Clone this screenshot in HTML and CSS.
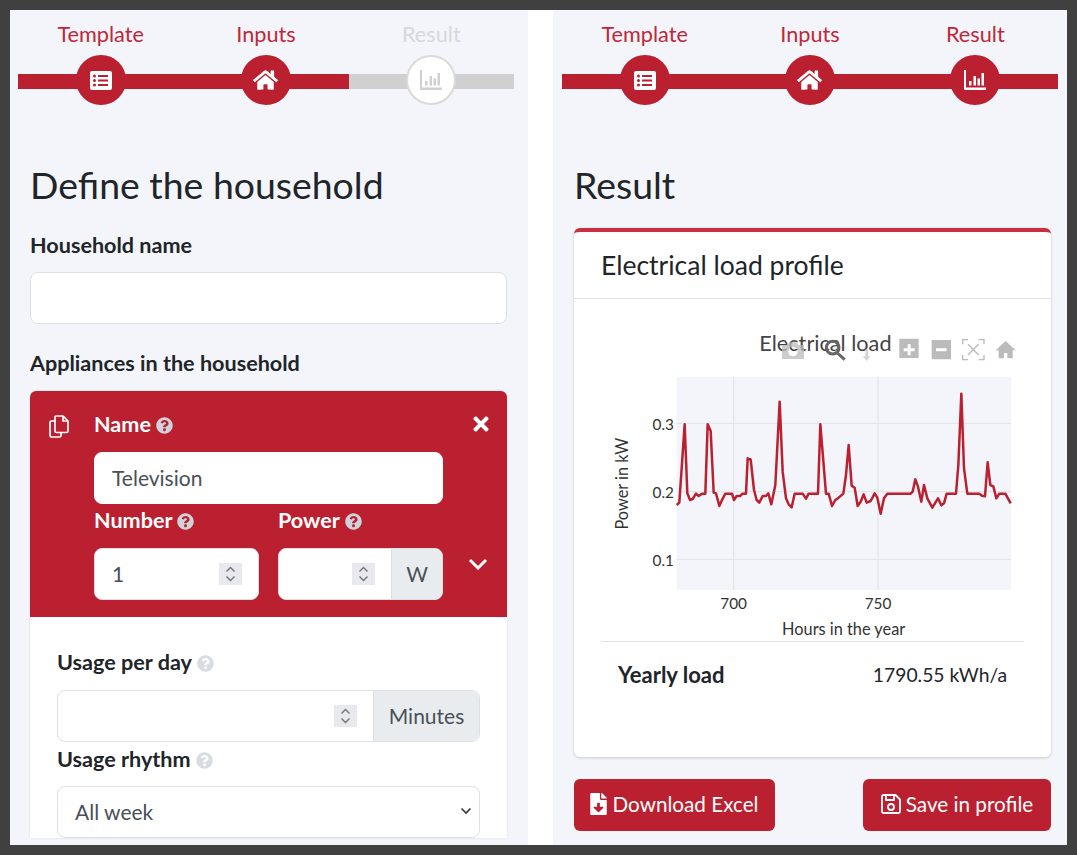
FILE: index.html
```html
<!DOCTYPE html>
<html lang="en">
<head>
<meta charset="UTF-8">
<meta name="viewport" content="width=device-width, initial-scale=1.0">
<link rel="stylesheet" href="styles.css">
<title>Load profile generator</title>
</head>
<body>
  <svg class="defs" width="0" height="0" aria-hidden="true">
    <symbol id="i-list" viewBox="0 0 22 19">
      <path fill-rule="evenodd" d="M2 0h18a2 2 0 0 1 2 2v15a2 2 0 0 1-2 2H2a2 2 0 0 1-2-2V2a2 2 0 0 1 2-2zM4.500 3.500a1.500 1.500 0 1 0 0 3 1.500 1.500 0 0 0 0-3zm0 4.500a1.500 1.500 0 1 0 0 3 1.500 1.500 0 0 0 0-3zm0 4.500a1.500 1.500 0 1 0 0 3 1.500 1.500 0 0 0 0-3zM8 4v2h10V4zm0 4.500v2h10v-2zM8 13v2h10v-2z"/>
    </symbol>
    <symbol id="i-home" viewBox="0 0 576 512">
      <path d="M280.37 148.26L96 300.11V464a16 16 0 0 0 16 16l112.06-.29a16 16 0 0 0 15.92-16V368a16 16 0 0 1 16-16h64a16 16 0 0 1 16 16v95.64a16 16 0 0 0 16 16.05L464 480a16 16 0 0 0 16-16V300L295.67 148.26a12.19 12.19 0 0 0-15.3 0zM571.6 251.47L488 182.56V44.05a12 12 0 0 0-12-12h-56a12 12 0 0 0-12 12v72.61L318.47 43a48 48 0 0 0-61 0L4.34 251.47a12 12 0 0 0-1.6 16.9l25.5 31A12 12 0 0 0 45.15 301l235.22-193.74a12.19 12.19 0 0 1 15.3 0L530.9 301a12 12 0 0 0 16.9-1.6l25.5-31a12 12 0 0 0-1.7-16.93z"/>
    </symbol>
    <symbol id="i-chart" viewBox="0 0 22 20">
      <path d="M0 0h2v17.500h20V20H1a1 1 0 0 1-1-1zM5 11h2.500v4.500H5zM9.500 6H12v9.500H9.500zM13.500 8.500H16v7h-2.500zM17.500 3H20v12.500h-2.500z"/>
    </symbol>
    <symbol id="i-help" viewBox="0 0 512 512">
      <path d="M504 256c0 136.997-111.043 248-248 248S8 392.997 8 256C8 119.083 119.043 8 256 8s248 111.083 248 248zM262.655 90c-54.497 0-89.255 22.957-116.549 63.758-3.536 5.286-2.353 12.415 2.715 16.258l34.699 26.31c5.205 3.947 12.621 3.008 16.665-2.122 17.864-22.658 30.113-35.797 57.303-35.797 20.429 0 45.698 13.148 45.698 32.958 0 14.976-12.363 22.667-32.534 33.976C247.128 238.528 216 254.941 216 296v4c0 6.627 5.373 12 12 12h56c6.627 0 12-5.373 12-12v-1.333c0-28.462 83.186-29.647 83.186-106.667 0-58.002-60.165-102-116.531-102zM256 338c-25.365 0-46 20.635-46 46 0 25.364 20.635 46 46 46s46-20.636 46-46c0-25.365-20.635-46-46-46z"/>
    </symbol>
    <symbol id="i-spin" viewBox="0 0 23 22">
      <path d="M7.500 8.500l4-4 4 4M7.500 13.500l4 4 4-4" fill="none" stroke="#6c757d" stroke-width="1.400"/>
    </symbol>
  </svg>

  <main class="page">
    <section class="panel panel-left">
      <div class="stepper">
        <div class="step done">
          <span class="step-name">Template</span>
          <div class="step-track"><span class="step-dot"><svg class="ico-list"><use href="#i-list"/></svg></span></div>
        </div>
        <div class="step done">
          <span class="step-name">Inputs</span>
          <div class="step-track"><span class="step-dot"><svg class="ico-home"><use href="#i-home"/></svg></span></div>
        </div>
        <div class="step">
          <span class="step-name">Result</span>
          <div class="step-track"><span class="step-dot"><svg class="ico-chart"><use href="#i-chart"/></svg></span></div>
        </div>
      </div>

      <h2 class="title">Define the household</h2>

      <label class="lbl lbl-household" for="household">Household name</label>
      <input class="box box-household" type="text" id="household">

      <div class="lbl lbl-appliances">Appliances in the household</div>

      <div class="appliance">
        <div class="appliance-head">
          <svg class="ico-copy" viewBox="0 0 20 23" fill="none" stroke="#fff" stroke-width="1.700" stroke-linejoin="round">
            <path d="M7 1h7l5 5v10a1.500 1.500 0 0 1-1.500 1.500h-10A1.500 1.500 0 0 1 6 16V2a1 1 0 0 1 1-1z"/>
            <path d="M14 1v5h5"/>
            <path d="M6 6H2.500A1.500 1.500 0 0 0 1 7.500v13A1.500 1.500 0 0 0 2.500 22h8a1.500 1.500 0 0 0 1.500-1.500v-3"/>
          </svg>
          <div class="head-fields">
            <div class="lbl lbl-light">Name <svg class="ico-help"><use href="#i-help"/></svg></div>
            <input class="box box-name" type="text" value="Television">
            <div class="head-row">
              <div class="head-col">
                <div class="lbl lbl-light">Number <svg class="ico-help"><use href="#i-help"/></svg></div>
                <div class="box group">
                  <input class="group-input" type="text" value="1">
                  <svg class="spin"><use href="#i-spin"/></svg>
                </div>
              </div>
              <div class="head-col">
                <div class="lbl lbl-light">Power <svg class="ico-help"><use href="#i-help"/></svg></div>
                <div class="box group">
                  <input class="group-input" type="text">
                  <svg class="spin"><use href="#i-spin"/></svg>
                  <span class="addon addon-w">W</span>
                </div>
              </div>
            </div>
          </div>
          <div class="head-actions">
            <svg class="ico-close" viewBox="0 0 352 512"><path d="M242.72 256l100.07-100.07c12.28-12.28 12.28-32.19 0-44.48l-22.24-22.24c-12.28-12.28-32.19-12.28-44.48 0L176 189.28 75.93 89.21c-12.28-12.28-32.19-12.28-44.48 0L9.21 111.45c-12.28 12.28-12.28 32.19 0 44.48L109.28 256 9.21 356.07c-12.28 12.28-12.28 32.19 0 44.48l22.24 22.24c12.28 12.28 32.2 12.28 44.48 0L176 322.72l100.07 100.07c12.28 12.28 32.2 12.28 44.48 0l22.24-22.24c12.28-12.28 12.28-32.19 0-44.48L242.72 256z"/></svg>
            <svg class="ico-down" viewBox="0 0 20 12"><path d="M2 2l8 8 8-8" fill="none" stroke="#fff" stroke-width="3"/></svg>
          </div>
        </div>
        <div class="appliance-body">
          <div class="lbl lbl-usage">Usage per day <svg class="ico-help ico-help-dim"><use href="#i-help"/></svg></div>
          <div class="box group">
            <input class="group-input" type="text">
            <svg class="spin"><use href="#i-spin"/></svg>
            <span class="addon addon-min">Minutes</span>
          </div>
          <div class="lbl lbl-rhythm">Usage rhythm <svg class="ico-help ico-help-dim"><use href="#i-help"/></svg></div>
          <div class="box select">
            <span>All week</span>
            <svg class="ico-select" viewBox="0 0 12 8"><path d="M1.500 1.500L6 6l4.500-4.500" fill="none" stroke="#343a40" stroke-width="1.700"/></svg>
          </div>
        </div>
      </div>
    </section>

    <section class="panel panel-right">
      <div class="stepper">
        <div class="step done">
          <span class="step-name">Template</span>
          <div class="step-track"><span class="step-dot"><svg class="ico-list"><use href="#i-list"/></svg></span></div>
        </div>
        <div class="step done">
          <span class="step-name">Inputs</span>
          <div class="step-track"><span class="step-dot"><svg class="ico-home"><use href="#i-home"/></svg></span></div>
        </div>
        <div class="step done">
          <span class="step-name">Result</span>
          <div class="step-track"><span class="step-dot"><svg class="ico-chart"><use href="#i-chart"/></svg></span></div>
        </div>
      </div>

      <h2 class="title">Result</h2>

      <div class="card">
        <div class="card-head">Electrical load profile</div>
        <div class="card-body">
          <!-- plot drawn in 3x units so the trace points stay whole numbers -->
          <svg class="plot" viewBox="3 0 1269 948">
            <rect x="230" y="155" width="1003" height="640" fill="#f3f5fa"/>
            <g stroke="#e4e6ea" stroke-width="4">
              <path d="M401 155V795M834 155V795"/>
              <path d="M230 295H1233M230 500H1233M230 703H1233"/>
            </g>
            <polyline fill="none" stroke="#bb2030" stroke-width="7.500" stroke-linejoin="round" points="230,540 238,533 254,298 262,505 270,525 278,522 288,506 296,513 306,506 316,506 323,298 332,318 341,503 348,505 358,543 366,525 376,506 396,506 402,525 410,513 420,513 428,506 438,506 443,400 452,403 462,495 470,525 478,533 488,513 498,513 505,505 514,538 526,480 539,230 548,440 558,520 566,538 575,547 584,506 608,506 618,521 626,506 654,506 661,298 678,506 686,506 696,543 706,525 716,518 730,506 738,450 746,360 755,482 764,488 773,543 782,530 791,508 800,533 812,528 824,505 832,518 842,566 852,520 862,506 932,506 938,500 946,463 954,485 964,530 972,480 982,520 997,548 1014,520 1024,541 1032,535 1040,506 1068,506 1075,420 1084,206 1092,430 1102,506 1138,506 1146,512 1155,514 1163,412 1171,480 1180,484 1189,520 1198,506 1216,506 1232,535"/>
            <g class="plot-text">
              <g class="plot-tick">
                <text x="222" y="316" text-anchor="end">0.3</text>
                <text x="222" y="520" text-anchor="end">0.2</text>
                <text x="222" y="723" text-anchor="end">0.1</text>
                <text x="401" y="853" text-anchor="middle">700</text>
                <text x="834" y="853" text-anchor="middle">750</text>
              </g>
              <text x="731" y="931" text-anchor="middle">Hours in the year</text>
              <text transform="translate(84 476) rotate(-90)" text-anchor="middle">Power in kW</text>
            </g>
            <text class="plot-title" x="478" y="79">Electrical load</text>
            <g class="modebar">
              <path opacity=".75" d="M546 60h16l6-8h22l6 8h16v42h-66zM579 66a14 14 0 1 0 0 28 14 14 0 0 0 0-28z" fill-rule="evenodd"/>
              <circle cx="698" cy="68" r="19" fill="none" stroke="#666" stroke-width="9"/>
              <path d="M712 84l22 20" stroke="#666" stroke-width="9"/>
              <path opacity=".6" d="M796 72h8v22h8l-12 14-12-14h8z"/>
              <path fill-rule="evenodd" d="M898 45h58v58h-58zM923 62v12h-12v9h12v12h9v-12h12v-9h-12V62z" transform="translate(0 -4)"/>
              <path fill-rule="evenodd" d="M995 45h58v58h-58zM1008 70v9h32v-9z"/>
              <path fill="none" stroke="#bbb" stroke-width="4" d="M1088 58V44h16M1136 44h16v14M1152 90v14h-16M1104 104h-16V90M1104 58l32 32M1136 58l-32 32"/>
              <path d="M1217 48l30 28h-9v24h-16v-16h-10v16h-16V76h-9z"/>
            </g>
          </svg>
          <div class="total">
            <span class="total-name">Yearly load</span>
            <span class="total-value">1790.55 kWh/a</span>
          </div>
        </div>
      </div>

      <div class="actions">
        <button class="btn btn-excel" type="button">
          <svg class="ico-file" viewBox="0 0 384 512"><path fill="#fff" d="M224 136V0H24C10.700 0 0 10.700 0 24v464c0 13.300 10.700 24 24 24h336c13.300 0 24-10.700 24-24V160H248c-13.200 0-24-10.800-24-24zm76.450 211.360l-96.420 95.700c-6.650 6.610-17.390 6.610-24.040 0l-96.420-95.700C73.420 337.290 80.540 320 94.820 320H160v-80c0-8.840 7.160-16 16-16h32c8.840 0 16 7.160 16 16v80h65.180c14.280 0 21.400 17.290 11.270 27.360zM377 105L279.100 7c-4.500-4.500-10.600-7-17-7H256v128h128v-6.100c0-6.300-2.500-12.400-7-16.900z"/></svg>
          Download Excel
        </button>
        <button class="btn btn-save" type="button">
          <svg class="ico-save" viewBox="0 0 20 20" fill="none" stroke="#fff" stroke-width="1.800" stroke-linejoin="round"><path d="M2.500 1h12L19 5.500v12a1.500 1.500 0 0 1-1.500 1.500h-15A1.500 1.500 0 0 1 1 17.500v-15A1.500 1.500 0 0 1 2.500 1z"/><path d="M5 1v5h8V1"/><circle cx="10" cy="13" r="3"/></svg>
          Save in profile
        </button>
      </div>
    </section>
  </main>
</body>
</html>
```

FILE: styles.css
```css
* {
  box-sizing: border-box;
}

body {
  margin: 0;
  width: 1077px;
  height: 855px;
  overflow: hidden;
  background-color: #404040;
  font-family: "Lato", "Open Sans", sans-serif;
  color: #212529;
}

.defs {
  display: block;
  height: 0;
}

.page {
  display: flex;
  height: 835px;
  margin: 10px;
  background-color: #fff;
}

.panel {
  background-color: #f3f5fa;
  overflow: hidden;
  padding-top: 10px;
}

.panel-left {
  width: 518px;
  padding-left: 20px;
  margin-right: 25px;
}

.panel-right {
  width: 514px;
  padding-left: 21px;
}

/* progress steps */
.stepper {
  display: flex;
  width: 496px;
  height: 85px;
  margin-left: -12px;
}

.step {
  flex: 1;
  display: flex;
  flex-direction: column;
  align-items: center;
}

.step-name {
  height: 35px;
  line-height: 28px;
  font-size: 21.700px;
  color: #d6d8db;
}

.step-track {
  width: 100%;
  height: 50px;
  display: flex;
  justify-content: center;
  background: linear-gradient(#d0d0d0, #d0d0d0) 0 19px / 100% 15px no-repeat;
}

.step-dot {
  width: 50px;
  height: 50px;
  display: flex;
  align-items: center;
  justify-content: center;
  border: 2px solid #dadada;
  border-radius: 50%;
  background-color: #fff;
  fill: #d0d0d0;
}

.step.done .step-name {
  color: #c02838;
}

.step.done .step-track {
  background-image: linear-gradient(#bb2030, #bb2030);
}

.step.done .step-dot {
  border-color: #bb2030;
  background-color: #bb2030;
  fill: #fff;
}

.ico-list {
  width: 22px;
  height: 19px;
}

.ico-home {
  width: 25px;
  height: 22px;
}

.ico-chart {
  width: 22px;
  height: 20px;
}

.title {
  margin: 56px 0 0;
  font-size: 37.400px;
  line-height: 48px;
  font-weight: 400;
}

.lbl {
  display: block;
  font-size: 21.600px;
  line-height: 24px;
  font-weight: 700;
}

.lbl-household {
  margin-top: 24px;
}

.lbl-appliances {
  margin-top: 27px;
}

.box {
  display: block;
  height: 52px;
  border: 1px solid #dbe0e6;
  border-radius: 8px;
  background-color: #fff;
  font: inherit;
  font-size: 21px;
  color: #495057;
}

.box-household {
  width: 477px;
  margin-top: 15px;
}

/* appliance card */
.appliance {
  width: 477px;
  margin-top: 16px;
  border-radius: 6px 6px 0 0;
  background-color: #fff;
  box-shadow: 0 0 2px #d5d9e0;
}

.appliance-head {
  display: flex;
  height: 226px;
  padding: 21px 0 0 19px;
  border-radius: 6px 6px 0 0;
  background-color: #bb2030;
}

.ico-copy {
  width: 20px;
  height: 23px;
  margin: 3px 25px 0 0;
}

.head-fields {
  width: 349px;
}

.lbl-light {
  color: #fff;
}

.ico-help {
  width: 17px;
  height: 17px;
  vertical-align: -2px;
  fill: #ced4da;
}

.ico-help-dim {
  fill: #d8dce0;
}

.box-name {
  width: 349px;
  margin-top: 16px;
  padding: 0 17px 2px;
  border-color: #fff;
}

.head-row {
  display: flex;
  gap: 19px;
  margin-top: 4px;
}

.head-col {
  width: 165px;
}

.head-col .group {
  margin-top: 16px;
}

.group {
  display: flex;
  align-items: center;
  overflow: hidden;
}

.group-input {
  flex: 1;
  min-width: 0;
  height: 100%;
  padding: 0 17px 2px;
  border: 0;
  outline: 0;
  background: none;
  font: inherit;
  color: inherit;
}

.spin {
  flex: none;
  width: 23px;
  height: 22px;
  margin-right: 16px;
  background-color: #e9e9ed;
}

.addon {
  flex: none;
  height: 100%;
  display: flex;
  align-items: center;
  justify-content: center;
  padding-bottom: 2px;
  border-left: 1px solid #dbe0e6;
  background-color: #e9ecef;
}

.addon-w {
  width: 51px;
}

.addon-min {
  width: 106px;
}

.head-actions {
  flex: 1;
  display: flex;
  flex-direction: column;
  align-items: center;
  padding-left: 11px;
}

.ico-close {
  width: 16px;
  height: 22px;
  fill: #fff;
  margin-top: 1px;
}

.ico-down {
  width: 20px;
  height: 12px;
  margin: 123px 5px 0 0;
}

.appliance-body {
  padding: 33px 27px 0;
}

.lbl-rhythm {
  margin-top: 5px;
}

.lbl-usage + .group {
  margin-top: 16px;
}

.select {
  display: flex;
  align-items: center;
  justify-content: space-between;
  margin-top: 15px;
  padding: 0 7px 2px 17px;
}

.ico-select {
  width: 12px;
  height: 8px;
}

/* result card */
.card {
  width: 477px;
  height: 529px;
  margin-top: 19px;
  border-top: 4px solid #c8303f;
  border-radius: 6px;
  background-color: #fff;
  box-shadow: 0 1px 3px rgba(0, 0, 0, .18);
}

.card-head {
  height: 67px;
  padding-left: 27px;
  border-bottom: 1px solid #dfe3e8;
  font-size: 26.500px;
  line-height: 66px;
}

.card-body {
  padding: 26px 27px 0;
}

.plot {
  display: block;
  width: 423px;
  height: 316px;
}

.plot-text {
  font-size: 49px;
  fill: #333;
}

.plot-tick {
  font-size: 46px;
}

.plot-title {
  font-size: 65px;
  fill: #444;
}

.modebar {
  fill: #bbb;
}

.total {
  display: flex;
  justify-content: space-between;
  height: 68px;
  padding: 0 17px;
  border-top: 1px solid #dfe3e8;
  line-height: 66px;
}

.total-name {
  font-size: 22px;
  font-weight: 700;
}

.total-value {
  font-size: 19.300px;
}

.actions {
  display: flex;
  justify-content: space-between;
  width: 477px;
  margin-top: 22px;
}

.btn {
  height: 52px;
  padding: 0 0 2px;
  display: flex;
  align-items: center;
  justify-content: center;
  gap: 5px;
  border: 0;
  border-radius: 6px;
  background-color: #bb2030;
  color: #fff;
  font: inherit;
  font-size: 20.700px;
}

.btn-excel {
  width: 201px;
}

.btn-save {
  width: 188px;
}

.ico-file {
  width: 17px;
  height: 22px;
}

.ico-save {
  width: 20px;
  height: 20px;
}
```
